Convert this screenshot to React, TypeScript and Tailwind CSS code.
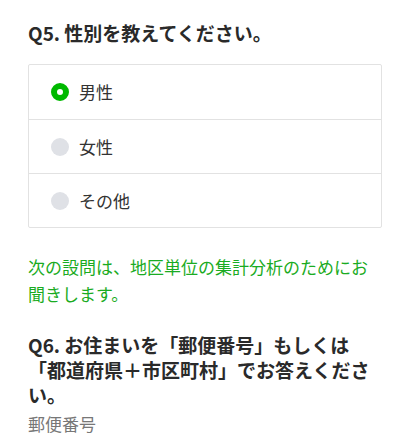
import React, { useState } from 'react';

interface Option {
  id: string;
  label: string;
}

const options: Option[] = [
  { id: 'male', label: '男性' },
  { id: 'female', label: '女性' },
  { id: 'other', label: 'その他' },
];

const Radio: React.FC<{ checked: boolean }> = ({ checked }) =>
  checked ? (
    <span className="block w-[18px] h-[18px] rounded-full border-[6px] border-[#00b900] bg-white shrink-0" />
  ) : (
    <span className="block w-[18px] h-[18px] rounded-full bg-[#dfe1e6] shrink-0" />
  );

const App: React.FC = () => {
  const [selected, setSelected] = useState('male');

  return (
    <div
      className="min-h-[440px] bg-white px-[28px] pt-[19px] text-[#333]"
      style={{ fontFamily: '"Noto Sans CJK JP", "Noto Sans", sans-serif' }}
    >
      <h2 className="text-[19px] leading-[27px] font-bold text-[#2a2a2a]">Q5. 性別を教えてください。</h2>

      {/* options */}
      <div className="mt-[18px] border border-[#e2e2e2] rounded-[2px]">
        {options.map((opt, i) => (
          <button
            key={opt.id}
            onClick={() => setSelected(opt.id)}
            className={`w-full h-[54px] flex items-center gap-[10px] pl-[22px] text-left ${
              i > 0 ? 'border-t border-[#e2e2e2]' : ''
            }`}
          >
            <Radio checked={selected === opt.id} />
            <span className="text-[17px] text-[#333]">{opt.label}</span>
          </button>
        ))}
      </div>

      <p className="mt-[25px] text-[17px] leading-[27px] text-[#1aab22]">
        次の設問は、地区単位の集計分析のためにお聞きします。
      </p>

      <h2 className="mt-[25px] text-[19px] leading-[25px] font-bold text-[#2a2a2a]">
        Q6. お住まいを「郵便番号」もしくは「都道府県＋市区町村」でお答えください。
      </h2>

      <p className="mt-[5px] text-[17px] leading-[24px] text-[#777]">郵便番号</p>
    </div>
  );
};

export default App;
